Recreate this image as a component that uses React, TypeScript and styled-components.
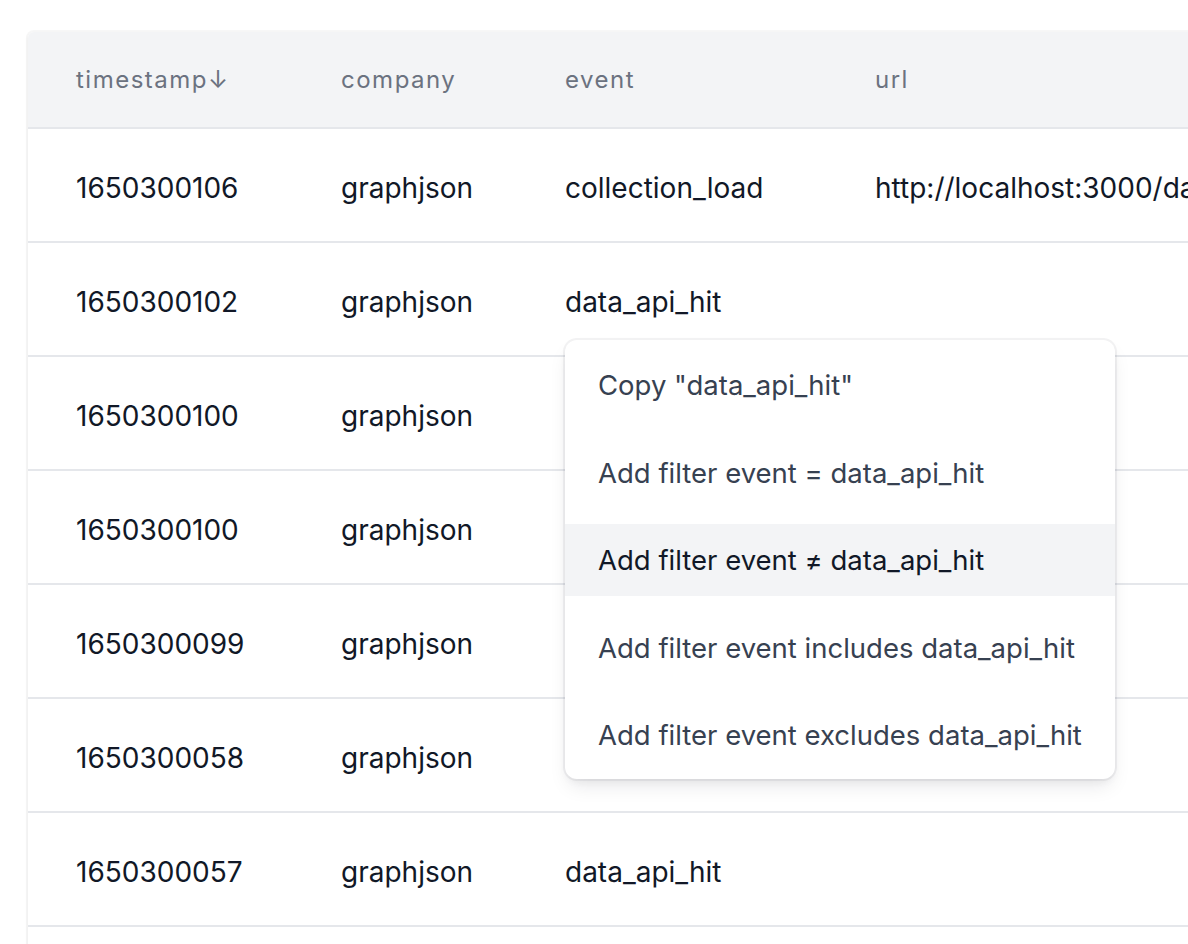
import React from "react";
import styled, { createGlobalStyle } from "styled-components";

const GlobalStyle = createGlobalStyle`
  html, body {
    margin: 0;
    padding: 0;
    background: #ffffff;
    overflow: hidden;
  }
  body {
    font-family: Inter, "Noto Sans", "Liberation Sans", sans-serif;
    -webkit-font-smoothing: antialiased;
  }
`;

const Page = styled.div`
  width: 1188px;
  height: 944px;
  overflow: hidden;
  padding: 32px 0 0 28px;
  box-sizing: border-box;
`;

const Card = styled.div`
  position: relative;
  width: 1400px;
  border-radius: 6px 0 0 0;
  box-shadow: 0 0 0 2px rgba(17, 24, 39, 0.035), 0 2px 4px rgba(17, 24, 39, 0.05);
  background: #ffffff;
`;

const Table = styled.table`
  border-collapse: collapse;
  table-layout: fixed;
  width: 1400px;
`;

const Col = styled.col<{ $w: number }>`
  width: ${(p) => p.$w}px;
`;

const HeadRow = styled.tr`
  background: #f3f4f6;
  height: 96px;
  border-bottom: 2px solid #e5e7eb;
`;

const Th = styled.th`
  padding: 0 0 0 48px;
  text-align: left;
  font-size: 24px;
  font-weight: 400;
  letter-spacing: 1.5px;
  color: #6b7280;
  white-space: nowrap;
  &:first-child {
    border-top-left-radius: 6px;
  }
`;

const Row = styled.tr`
  height: 114px;
  border-bottom: 2px solid #e5e7eb;
`;

const Td = styled.td`
  padding: 6px 0 0 48px;
  font-size: 28px;
  color: #111827;
  white-space: nowrap;
  overflow: visible;
`;

const Menu = styled.div`
  position: absolute;
  left: 537px;
  top: 308px;
  width: 550px;
  height: 439px;
  box-sizing: border-box;
  padding: 9px 0 0;
  display: flex;
  flex-direction: column;
  gap: 15.5px;
  background: #ffffff;
  border-radius: 12px;
  box-shadow: 0 0 0 2px rgba(17, 24, 39, 0.05), 0 10px 20px -4px rgba(17, 24, 39, 0.1),
    0 4px 8px -2px rgba(17, 24, 39, 0.06);
`;

const Item = styled.div<{ $active?: boolean }>`
  height: 72px;
  display: flex;
  align-items: center;
  padding: 0 0 0 33px;
  font-size: 27.5px;
  color: ${(p) => (p.$active ? "#111827" : "#374151")};
  background: ${(p) => (p.$active ? "#f3f4f6" : "transparent")};
  white-space: nowrap;
`;

const rows: [string, string, string, string][] = [
  ["1650300106", "graphjson", "collection_load", "http://localhost:3000/dashboard/collections"],
  ["1650300102", "graphjson", "data_api_hit", ""],
  ["1650300100", "graphjson", "", ""],
  ["1650300100", "graphjson", "", ""],
  ["1650300099", "graphjson", "", ""],
  ["1650300058", "graphjson", "", ""],
  ["1650300057", "graphjson", "data_api_hit", ""],
  ["", "", "", ""],
];

const menuItems = [
  'Copy "data_api_hit"',
  "Add filter event = data_api_hit",
  "Add filter event \u2260 data_api_hit",
  "Add filter event includes data_api_hit",
  "Add filter event excludes data_api_hit",
];

export default function App() {
  return (
    <>
      <GlobalStyle />
      <Page>
        <Card>
          <Table>
            <colgroup>
              <Col $w={265} />
              <Col $w={224} />
              <Col $w={310} />
              <Col $w={601} />
            </colgroup>
            <thead>
              <HeadRow>
                <Th>timestamp↓</Th>
                <Th>company</Th>
                <Th>event</Th>
                <Th>url</Th>
              </HeadRow>
            </thead>
            <tbody>
              {rows.map((r, i) => (
                <Row key={i}>
                  {r.map((c, j) => (
                    <Td key={j}>{c}</Td>
                  ))}
                </Row>
              ))}
            </tbody>
          </Table>
          <Menu>
            {menuItems.map((m, i) => (
              <Item key={i} $active={i === 2}>
                {m}
              </Item>
            ))}
          </Menu>
        </Card>
      </Page>
    </>
  );
}
